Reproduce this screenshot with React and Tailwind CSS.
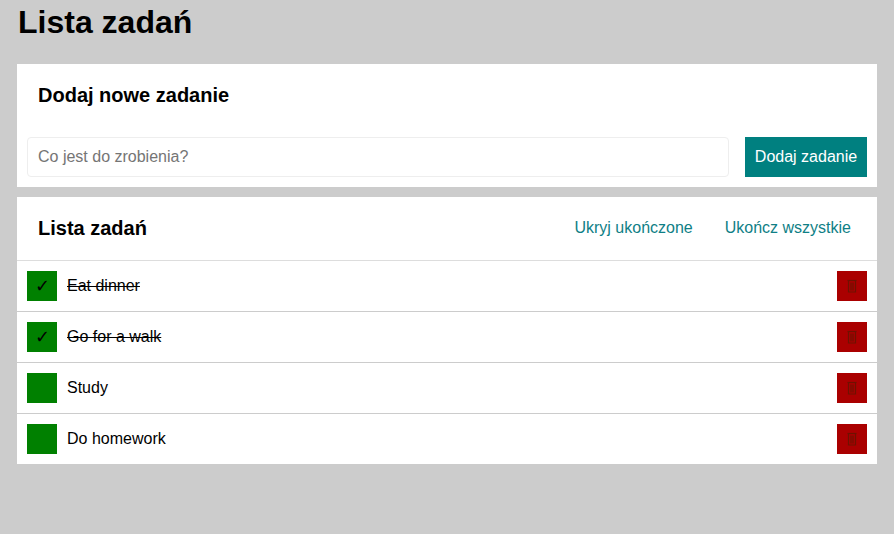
import React, { useState } from 'react';

const initialTasks = [
  { id: 1, text: 'Eat dinner', done: true },
  { id: 2, text: 'Go for a walk', done: true },
  { id: 3, text: 'Study', done: false },
  { id: 4, text: 'Do homework', done: false },
];

function TrashIcon() {
  return (
    <svg width="10" height="14" viewBox="0 0 10 14" fill="none" stroke="#6e1200" strokeWidth="1.2">
      <path d="M0.5 1.5h9" />
      <path d="M1.5 1.5v11.5h7V1.5" />
      <path d="M4 3.5v8M6 3.5v8" />
    </svg>
  );
}

export default function App() {
  const [tasks, setTasks] = useState(initialTasks);
  const [input, setInput] = useState('');

  const toggle = id => setTasks(t => t.map(x => (x.id === id ? { ...x, done: !x.done } : x)));
  const remove = id => setTasks(t => t.filter(x => x.id !== id));
  const add = () => {
    if (!input.trim()) return;
    setTasks(t => [...t, { id: Date.now(), text: input.trim(), done: false }]);
    setInput('');
  };

  return (
    <div className="min-h-[534px] bg-[#cccccc] px-[17px] pb-6 font-['Liberation_Sans',Arial,sans-serif] text-black">
      <h1 className="pt-[2px] pl-px text-[32px] leading-[40px] font-bold">Lista zadań</h1>

      {/* add task card */}
      <div className="mt-[22px] bg-white px-[10px] pb-[10px]">
        <h2 className="px-[11px] pt-[18px] text-[20px] leading-[26px] font-bold">Dodaj nowe zadanie</h2>
        <div className="mt-[29px] flex items-center gap-4">
          <input
            type="text"
            value={input}
            onChange={e => setInput(e.target.value)}
            onKeyDown={e => e.key === 'Enter' && add()}
            placeholder="Co jest do zrobienia?"
            className="h-10 flex-1 rounded border border-[#eeeeee] px-[10px] text-[16px] outline-none placeholder:text-[#757575]"
          />
          <button onClick={add} className="h-10 w-[122px] bg-[#008080] text-[16px] text-white">
            Dodaj zadanie
          </button>
        </div>
      </div>

      {/* task list card */}
      <div className="mt-[10px] bg-white">
        <div className="flex h-[64px] items-center justify-between border-b border-[#dddddd] pb-[2px] pl-[21px] pr-[26px]">
          <h2 className="text-[20px] leading-[26px] font-bold">Lista zadań</h2>
          <div className="flex gap-8 text-[16px] text-[#0f7f86]">
            <button>Ukryj ukończone</button>
            <button>Ukończ wszystkie</button>
          </div>
        </div>
        {tasks.map((task, i) => (
          <div
            key={task.id}
            className={`flex items-center px-[10px] ${
              i < tasks.length - 1 ? 'h-[51px] border-b border-[#cccccc]' : 'h-[50px]'
            }`}
          >
            <button
              onClick={() => toggle(task.id)}
              className="flex h-[30px] w-[30px] items-center justify-center bg-[#008000] text-[18px] text-black"
            >
              {task.done ? '✓' : ''}
            </button>
            <span className={`ml-[10px] flex-1 text-[16px] ${task.done ? 'line-through' : ''}`}>
              {task.text}
            </span>
            <button
              onClick={() => remove(task.id)}
              className="flex h-[30px] w-[30px] items-center justify-center bg-[#aa0000]"
            >
              <TrashIcon />
            </button>
          </div>
        ))}
      </div>
    </div>
  );
}
